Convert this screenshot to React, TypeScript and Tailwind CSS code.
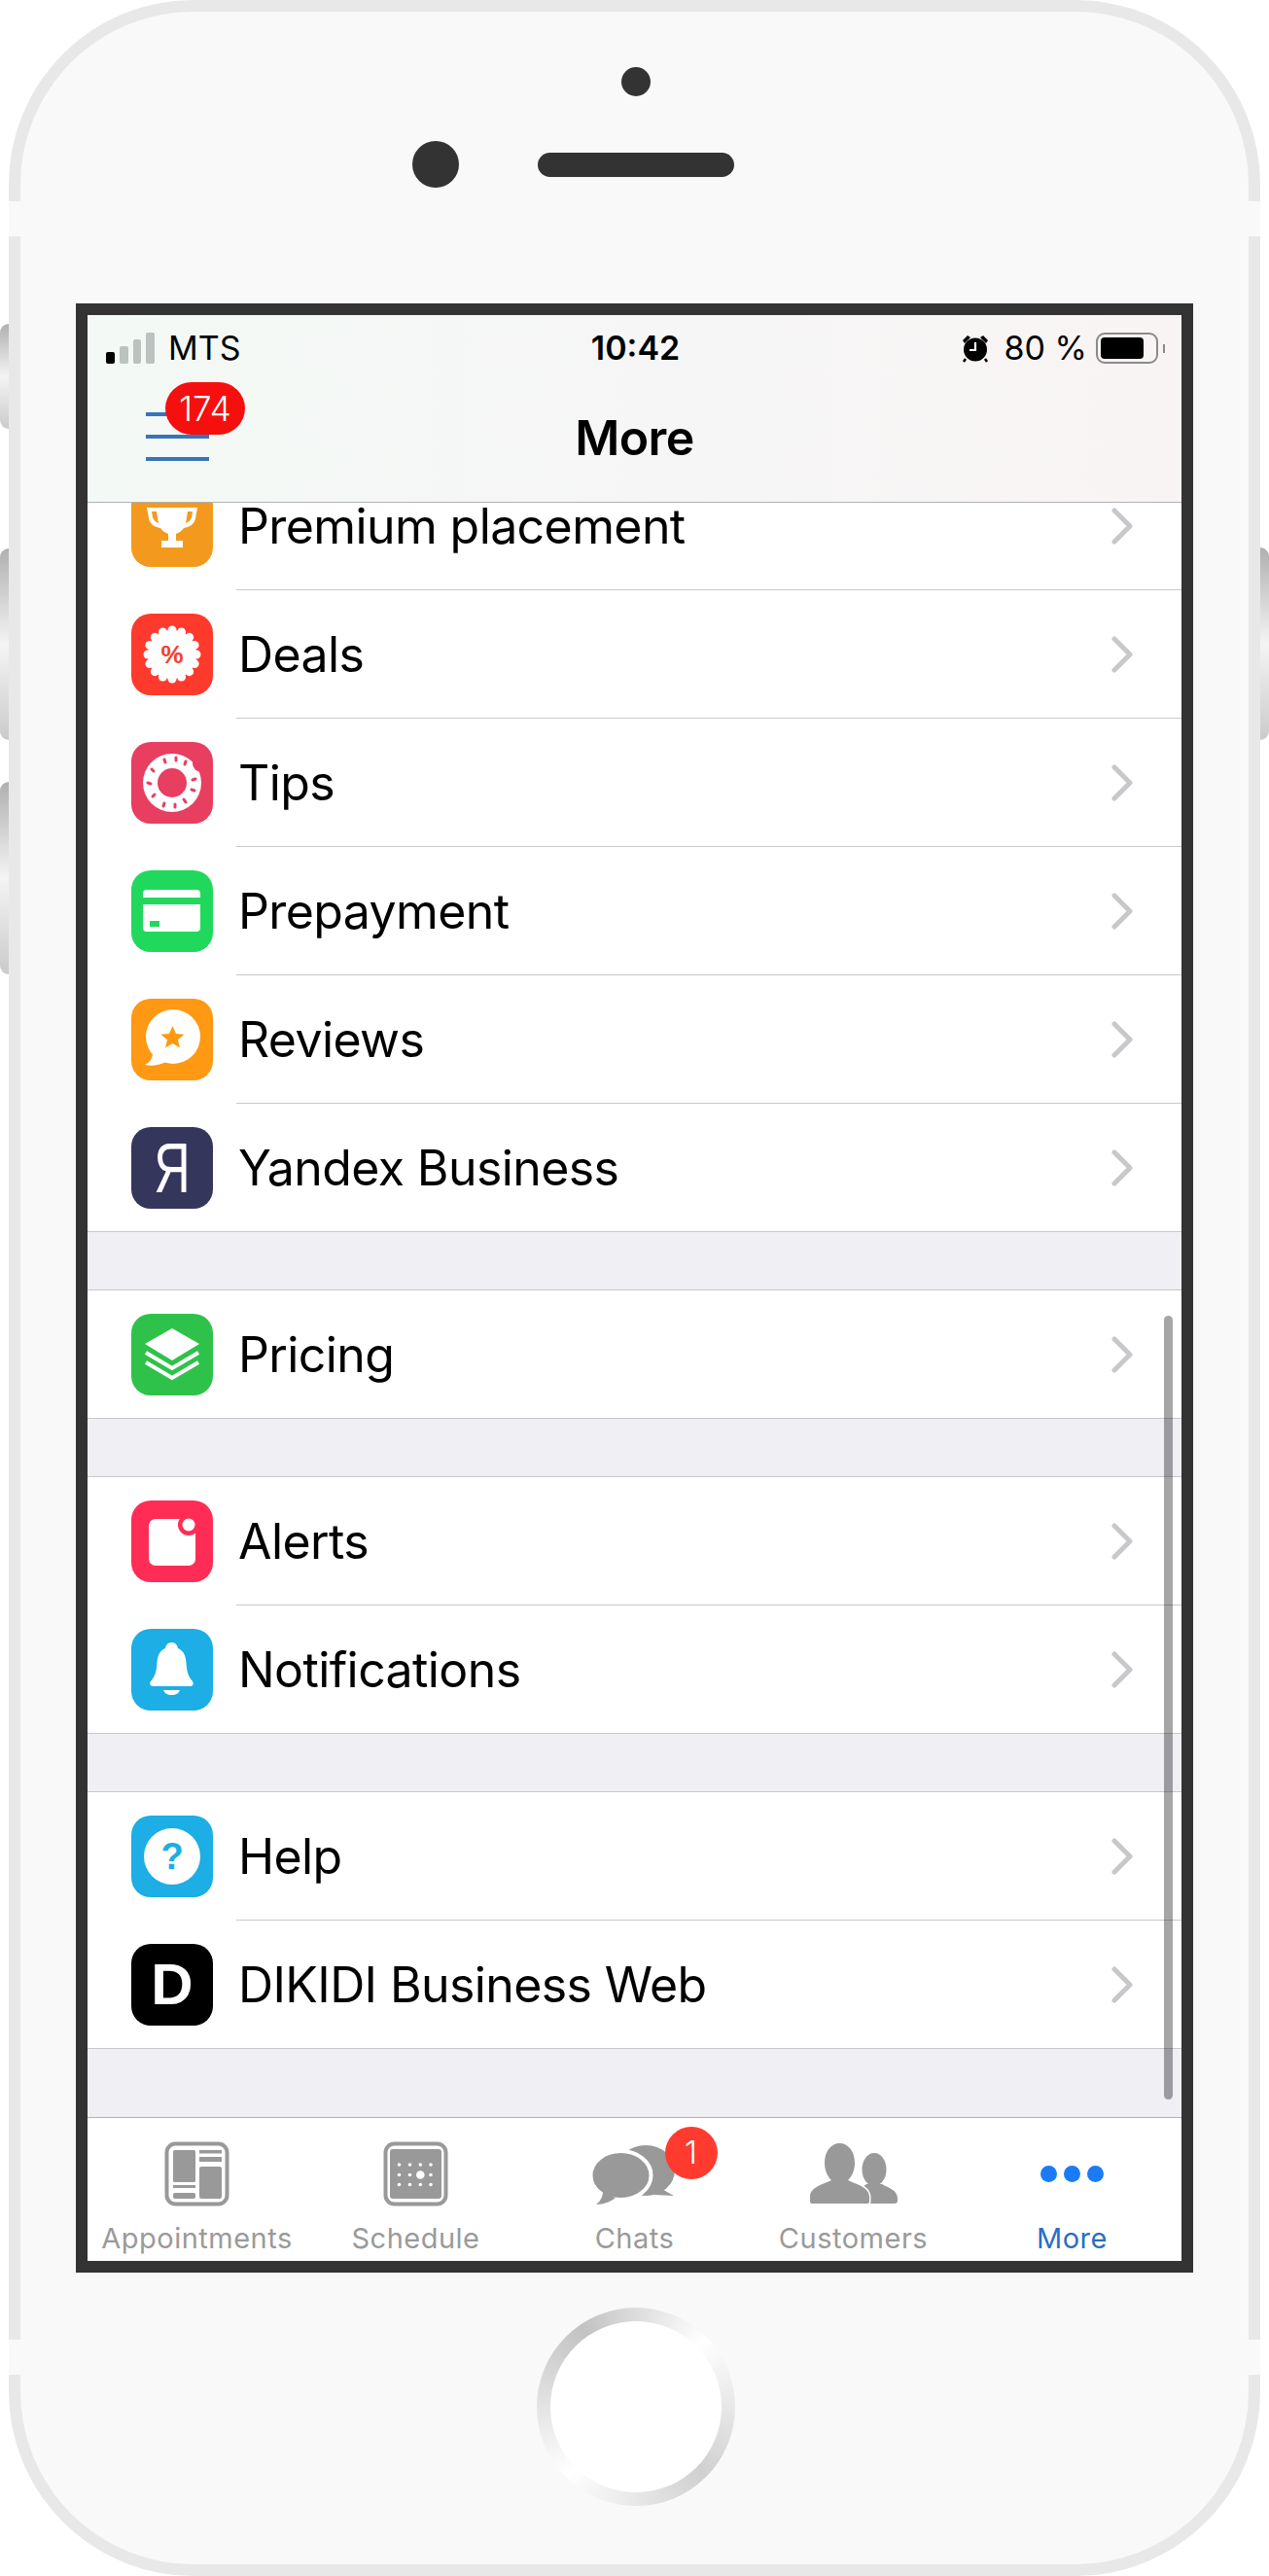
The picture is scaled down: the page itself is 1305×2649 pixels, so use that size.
import React from "react";

function Chevron() {
  return (
    <svg width="22" height="38" viewBox="0 0 22 38" fill="none">
      <path d="M3 3l16 16L3 35" stroke="#c7c7cc" strokeWidth="5" strokeLinecap="round" strokeLinejoin="round" />
    </svg>
  );
}

function IconSvg({ children }: { children: React.ReactNode }) {
  return (
    <svg width="84" height="84" viewBox="0 0 84 84" className="absolute inset-0">
      {children}
    </svg>
  );
}

function Trophy() {
  return (
    <IconSvg>
      <path d="M16 23h52l-2 11c-1 6-6 9-12 10-2 3-5 5-8 6v7h7v7H31v-7h7v-7c-3-1-6-3-8-6-6-1-11-4-12-10z" fill="#fff" />
      <path d="M21 27l1 6c1 3 3 5 6 6l-2-12zM63 27l-1 6c-1 3-3 5-6 6l2-12z" fill="#f39a1e" />
    </IconSvg>
  );
}

const scallops = Array.from({ length: 16 }, (_, i) => (i * Math.PI) / 8);

function DealBadge() {
  return (
    <>
      <IconSvg>
        <circle cx="42" cy="42" r="25" fill="#fff" />
        {scallops.map((a) => (
          <circle key={a} cx={42 + 25 * Math.cos(a)} cy={42 + 25 * Math.sin(a)} r="4.5" fill="#fff" />
        ))}
      </IconSvg>
      <span className="relative font-['Liberation_Sans',sans-serif] font-bold text-[26px] text-[#fe3a2d]">%</span>
    </>
  );
}

function Donut() {
  return (
    <IconSvg>
      <circle cx="42" cy="42" r="30" fill="#fff" />
      <circle cx="42" cy="42" r="15" fill="#e83e60" />
      <circle cx="72" cy="22" r="9" fill="#e83e60" />
      <g stroke="#e83e60" strokeWidth="3" strokeLinecap="round">
        <path d="M34 18l1 3M46 16l0 3M56 20l-1 3M21 28l2 2M17 42l3 1M22 56l2-2M33 66l1-3M45 67l0-3M56 62l-2-3M65 50l-3-1M66 38l-3 1" />
      </g>
    </IconSvg>
  );
}

function Card() {
  return (
    <IconSvg>
      <rect x="12" y="20" width="59" height="43" rx="4" fill="#fff" />
      <rect x="12" y="28" width="59" height="7" fill="#20d95c" />
      <rect x="19" y="52" width="10" height="6" fill="#20d95c" />
    </IconSvg>
  );
}

function ReviewBubble() {
  return (
    <IconSvg>
      <circle cx="43" cy="39" r="28" fill="#fff" />
      <path d="M22 56c0 5-3 10-8 12 8 2 15 0 22-3z" fill="#fff" />
      <path d="M42.500 28l3.500 8 8.500.7-6.500 5.500 2 8.300-7.500-4.500-7.500 4.500 2-8.300-6.500-5.500 8.500-.7z" fill="#ff9812" />
    </IconSvg>
  );
}

function Layers() {
  return (
    <IconSvg>
      <path d="M42 15l28 16-28 17-28-17z" fill="#fff" />
      <path d="M15 40l27 16 27-16M15 50l27 16 27-16" fill="none" stroke="#fff" strokeWidth="4" />
    </IconSvg>
  );
}

function AlertBox() {
  return (
    <IconSvg>
      <rect x="18" y="19" width="48" height="48" rx="7" fill="#fff" />
      <circle cx="59" cy="25" r="11" fill="#ff2d55" />
      <circle cx="59" cy="25" r="6.500" fill="#fff" />
    </IconSvg>
  );
}

function Bell() {
  return (
    <IconSvg>
      <path d="M41.500 14c4 0 6 3 6.500 6 6 2.500 8 8 8.500 15 .5 8 2 14 6.500 19 1.500 2 .5 5-2 5H22c-2.500 0-3.500-3-2-5 4.500-5 6-11 6.500-19 .5-7 2.500-12.500 8.500-15 .5-3 2.500-6 6.500-6z" fill="#fff" />
      <path d="M33 63h17c-1 3-4 5-8.500 5S34 66 33 63z" fill="#fff" />
    </IconSvg>
  );
}

function HelpCircle() {
  return (
    <>
      <IconSvg>
        <circle cx="42" cy="42" r="29" fill="#fff" />
      </IconSvg>
      <span className="relative font-['Liberation_Sans',sans-serif] font-bold text-[38px] text-[#1caee4]">?</span>
    </>
  );
}

type Row = { label: string; bg: string; icon: React.ReactNode };

const firstGroup: Row[] = [
  { label: "Premium placement", bg: "bg-[#f39a1e]", icon: <Trophy /> },
  { label: "Deals", bg: "bg-[#fe3a2d]", icon: <DealBadge /> },
  { label: "Tips", bg: "bg-[#e83e60]", icon: <Donut /> },
  { label: "Prepayment", bg: "bg-[#20d95c]", icon: <Card /> },
  { label: "Reviews", bg: "bg-[#ff9812]", icon: <ReviewBubble /> },
  {
    label: "Yandex Business",
    bg: "bg-[#34365c]",
    icon: <span className="scale-x-[0.72] font-['Liberation_Sans',sans-serif] text-[72px] leading-none text-white">Я</span>,
  },
];
const secondGroup: Row[] = [{ label: "Pricing", bg: "bg-[#2fc24a]", icon: <Layers /> }];
const thirdGroup: Row[] = [
  { label: "Alerts", bg: "bg-[#ff2d55]", icon: <AlertBox /> },
  { label: "Notifications", bg: "bg-[#1caee4]", icon: <Bell /> },
];
const fourthGroup: Row[] = [
  { label: "Help", bg: "bg-[#1caee4]", icon: <HelpCircle /> },
  {
    label: "DIKIDI Business Web",
    bg: "bg-black",
    icon: <span className="font-['Liberation_Sans',sans-serif] font-bold text-[60px] leading-none text-white">D</span>,
  },
];

function MenuRow({ row, last }: { row: Row; last: boolean }) {
  return (
    <div className={`flex h-[132px] bg-white ${last ? "border-b border-[#c8c7cc]" : ""}`}>
      <div className="ml-[45px] flex items-center">
        <div className={`relative flex h-[84px] w-[84px] items-center justify-center overflow-hidden rounded-[20px] ${row.bg}`}>
          {row.icon}
        </div>
      </div>
      <div className={`ml-[24px] flex flex-1 items-center justify-between pl-[2px] pr-[50px] ${last ? "" : "border-b border-[#c8c7cc]"}`}>
        <span className="text-[50px] leading-none tracking-[-0.6px] text-black">{row.label}</span>
        <Chevron />
      </div>
    </div>
  );
}

function Group({ rows, top }: { rows: Row[]; top?: boolean }) {
  return (
    <div className={top ? "" : "mt-[59px] border-t border-[#c8c7cc]"}>
      {rows.map((row, i) => (
        <MenuRow key={row.label} row={row} last={i === rows.length - 1} />
      ))}
    </div>
  );
}

function TabItem({ label, active, children }: { label: string; active?: boolean; children: React.ReactNode }) {
  return (
    <div className="flex flex-col items-center pt-[24px]">
      <div className="flex h-[67px] items-center justify-center">{children}</div>
      <span className={`mt-[16px] text-[29px] leading-[34px] tracking-[0.5px] whitespace-nowrap ${active ? "text-[#2a6fc2]" : "text-[#9a9a9a]"}`}>
        {label}
      </span>
    </div>
  );
}

function AppointmentsIcon() {
  return (
    <svg width="67" height="67" viewBox="0 0 67 67" fill="#999">
      <rect x="2.500" y="2.500" width="62" height="62" rx="9" fill="none" stroke="#999" strokeWidth="4" />
      <rect x="9" y="9" width="23" height="33" rx="1.500" />
      <rect x="9" y="45" width="23" height="3" />
      <rect x="9" y="53" width="23" height="6" rx="2" />
      <rect x="36" y="9" width="23" height="3.500" />
      <rect x="36" y="16" width="23" height="5" />
      <rect x="36" y="26" width="23" height="33" rx="2" />
    </svg>
  );
}

const scheduleDots: [number, number][] = [
  [16.5, 24], [27.5, 24], [38.3, 24], [49, 24],
  [16.5, 34.5], [27.5, 34.5], [49, 34.5],
  [16.5, 44.5], [27.5, 44.5], [38.3, 44.5], [49, 44.5],
];

function ScheduleIcon() {
  return (
    <svg width="67" height="67" viewBox="0 0 67 67" fill="#999">
      <rect x="2.500" y="2.500" width="62" height="62" rx="9" fill="none" stroke="#999" strokeWidth="4" />
      <rect x="7" y="8" width="53" height="51" rx="3" />
      {scheduleDots.map(([x, y]) => (
        <circle key={`${x}-${y}`} cx={x} cy={y} r="1.800" fill="#fff" />
      ))}
      <circle cx="38.300" cy="34.500" r="4.300" fill="#fff" />
    </svg>
  );
}

function ChatsIcon() {
  return (
    <div className="relative h-[67px] w-[92px]">
      <svg width="92" height="67" viewBox="0 0 92 67" fill="#999" className="absolute inset-0">
        <ellipse cx="57" cy="30" rx="30" ry="26" />
        <path d="M72 48l14 8-20-1z" />
        <ellipse cx="31.500" cy="35" rx="31" ry="25" stroke="#fff" strokeWidth="4" />
        <path d="M13 52c0 5-3 10-7 13 8 0 15-3 20-7z" />
      </svg>
      <span className="absolute left-[77px] top-[-15px] flex h-[54px] w-[54px] items-center justify-center rounded-full bg-[#ff3b30] text-[33px] font-light text-white">
        1
      </span>
    </div>
  );
}

function CustomersIcon() {
  return (
    <svg width="90" height="67" viewBox="0 0 90 67" fill="#999">
      <ellipse cx="66" cy="29" rx="12.500" ry="17" />
      <path d="M58 44h16c7 4 16 6 16 15v2a3 3 0 0 1-3 3H50V50z" />
      <path
        d="M0 62v-5c0-10 14-13 22-17-4-4-7-10-7-18C15 10 22 2 30.500 2S46 10 46 22c0 8-3 14-7 18 8 4 22 7 22 17v5a2 2 0 0 1-2 2H2a2 2 0 0 1-2-2z"
        stroke="#fff"
        strokeWidth="3"
        paintOrder="stroke"
      />
    </svg>
  );
}

function MoreIcon() {
  return (
    <div className="flex items-center gap-[7px]">
      <span className="h-[17px] w-[17px] rounded-full bg-[#1a7bf5]" />
      <span className="h-[17px] w-[17px] rounded-full bg-[#1a7bf5]" />
      <span className="h-[17px] w-[17px] rounded-full bg-[#1a7bf5]" />
    </div>
  );
}

function AlarmIcon() {
  return (
    <svg width="28" height="30" viewBox="0 0 28 30">
      <circle cx="14" cy="16.500" r="12" fill="#000" />
      <path d="M1 7l5-5 3 2-6 6zM27 7l-5-5-3 2 6 6z" fill="#000" />
      <path d="M4 26l-2 3M24 26l2 3" stroke="#000" strokeWidth="2.500" />
      <path d="M14 9v8h-6" stroke="#fff" strokeWidth="2.200" fill="none" />
    </svg>
  );
}

function StatusBar() {
  return (
    <div className="flex h-[60px] items-center justify-between pl-[19px] pr-[17px] pt-[8px] text-[34px] leading-none text-black">
      <div className="flex w-[300px] items-center">
        <div className="flex items-end gap-[5px]">
          <span className="h-[12px] w-[9px] rounded-[2px] bg-black" />
          <span className="h-[18px] w-[9px] rounded-[2px] bg-[#bcc2bf]" />
          <span className="h-[25px] w-[8px] rounded-[2px] bg-[#bcc2bf]" />
          <span className="h-[32px] w-[9px] rounded-[2px] bg-[#bcc2bf]" />
        </div>
        <span className="ml-[14px]">MTS</span>
      </div>
      <span className="font-semibold">10:42</span>
      <div className="flex w-[300px] items-center justify-end">
        <AlarmIcon />
        <span className="ml-[16px]">80 %</span>
        <div className="ml-[9px] h-[32px] w-[64px] rounded-[9px] border-[2px] border-[#8a8a8a] p-[3px] pr-[13px]">
          <div className="h-full w-full rounded-[4px] bg-black" />
        </div>
        <span className="ml-[5px] h-[9px] w-[2px] bg-[#8a8a8a]" />
      </div>
    </div>
  );
}

function Header() {
  return (
    <div className="relative z-10 h-[193px] border-b border-[#b2b2b2] bg-linear-to-r from-[#f3f9f5] via-[#f6f6f6] to-[#f9f4f4]">
      <StatusBar />
      <div className="relative flex h-[132px] items-center justify-center">
        <div className="absolute left-[60px] top-[40px] flex flex-col gap-[19px]">
          <span className="h-[4px] w-[65px] bg-[#3a73b8]" />
          <span className="h-[4px] w-[65px] bg-[#3a73b8]" />
          <span className="h-[4px] w-[65px] bg-[#3a73b8]" />
        </div>
        <span className="absolute left-[80px] top-[9px] flex h-[54px] w-[82px] items-center justify-center rounded-full bg-[#f50f0f] text-[35px] font-light text-white">
          174
        </span>
        <span className="text-[50px] font-semibold tracking-[-0.6px] text-black">More</span>
      </div>
    </div>
  );
}

function SideButton({ className }: { className: string }) {
  return <div className={`absolute w-[9px] bg-linear-to-b from-[#b0b0b0] via-[#f4f4f4] to-[#cbcbcb] ${className}`} />;
}

export default function App() {
  return (
    <div className="relative h-[2649px] w-[1305px] overflow-hidden bg-white font-['Inter',sans-serif]">
      <SideButton className="left-0 top-[333px] h-[108px] rounded-tl-[9px] rounded-bl-[9px]" />
      <SideButton className="left-0 top-[564px] h-[197px] rounded-tl-[9px] rounded-bl-[9px]" />
      <SideButton className="left-0 top-[804px] h-[198px] rounded-tl-[9px] rounded-bl-[9px]" />
      <SideButton className="right-0 top-[563px] h-[198px] rounded-tr-[9px] rounded-br-[9px]" />

      <div className="relative mx-[9px] h-[2649px] w-[1287px] rounded-[190px] border-[12px] border-[#e8e8e8] bg-[#f9f9f9]">
        <span className="absolute left-[-12px] top-[195px] h-[36px] w-[12px] bg-[#f9f9f9]" />
        <span className="absolute right-[-12px] top-[195px] h-[36px] w-[12px] bg-[#f9f9f9]" />
        <span className="absolute left-[-12px] top-[2394px] h-[36px] w-[12px] bg-[#f9f9f9]" />
        <span className="absolute right-[-12px] top-[2394px] h-[36px] w-[12px] bg-[#f9f9f9]" />

        <div className="ml-[618px] h-[30px] w-[30px] translate-y-[57px] rounded-full bg-[#333]" />
        <div className="ml-[403px] mt-[103px] flex items-center gap-[81px]">
          <span className="h-[48px] w-[48px] rounded-full bg-[#333]" />
          <span className="h-[25px] w-[202px] rounded-full bg-[#333]" />
        </div>

        <div className="ml-[57px] mt-[119px] h-[2025px] w-[1149px] border-[12px] border-[#333]">
          <div className="relative flex h-full flex-col bg-[#efeff4]">
            <Header />
            <div className="relative flex-1 overflow-hidden">
              <div className="mt-[-42px]">
                <Group rows={firstGroup} top />
                <Group rows={secondGroup} />
                <Group rows={thirdGroup} />
                <Group rows={fourthGroup} />
              </div>
              <div className="absolute right-[9px] top-[836px] h-[806px] w-[9px] rounded-full bg-black/35" />
            </div>
            <div className="grid h-[148px] grid-cols-5 border-t border-[#b2b2b2] bg-white">
              <TabItem label="Appointments"><AppointmentsIcon /></TabItem>
              <TabItem label="Schedule"><ScheduleIcon /></TabItem>
              <TabItem label="Chats"><ChatsIcon /></TabItem>
              <TabItem label="Customers"><CustomersIcon /></TabItem>
              <TabItem label="More" active><MoreIcon /></TabItem>
            </div>
          </div>
        </div>

        <div className="ml-[531px] mt-[36px] flex h-[204px] w-[204px] items-center justify-center rounded-full bg-[conic-gradient(from_45deg,#ffffff_0%,#d0d0d0_25%,#ffffff_50%,#c2c2c2_78%,#ffffff_100%)]">
          <div className="h-[176px] w-[176px] rounded-full bg-white" />
        </div>
      </div>
    </div>
  );
}
